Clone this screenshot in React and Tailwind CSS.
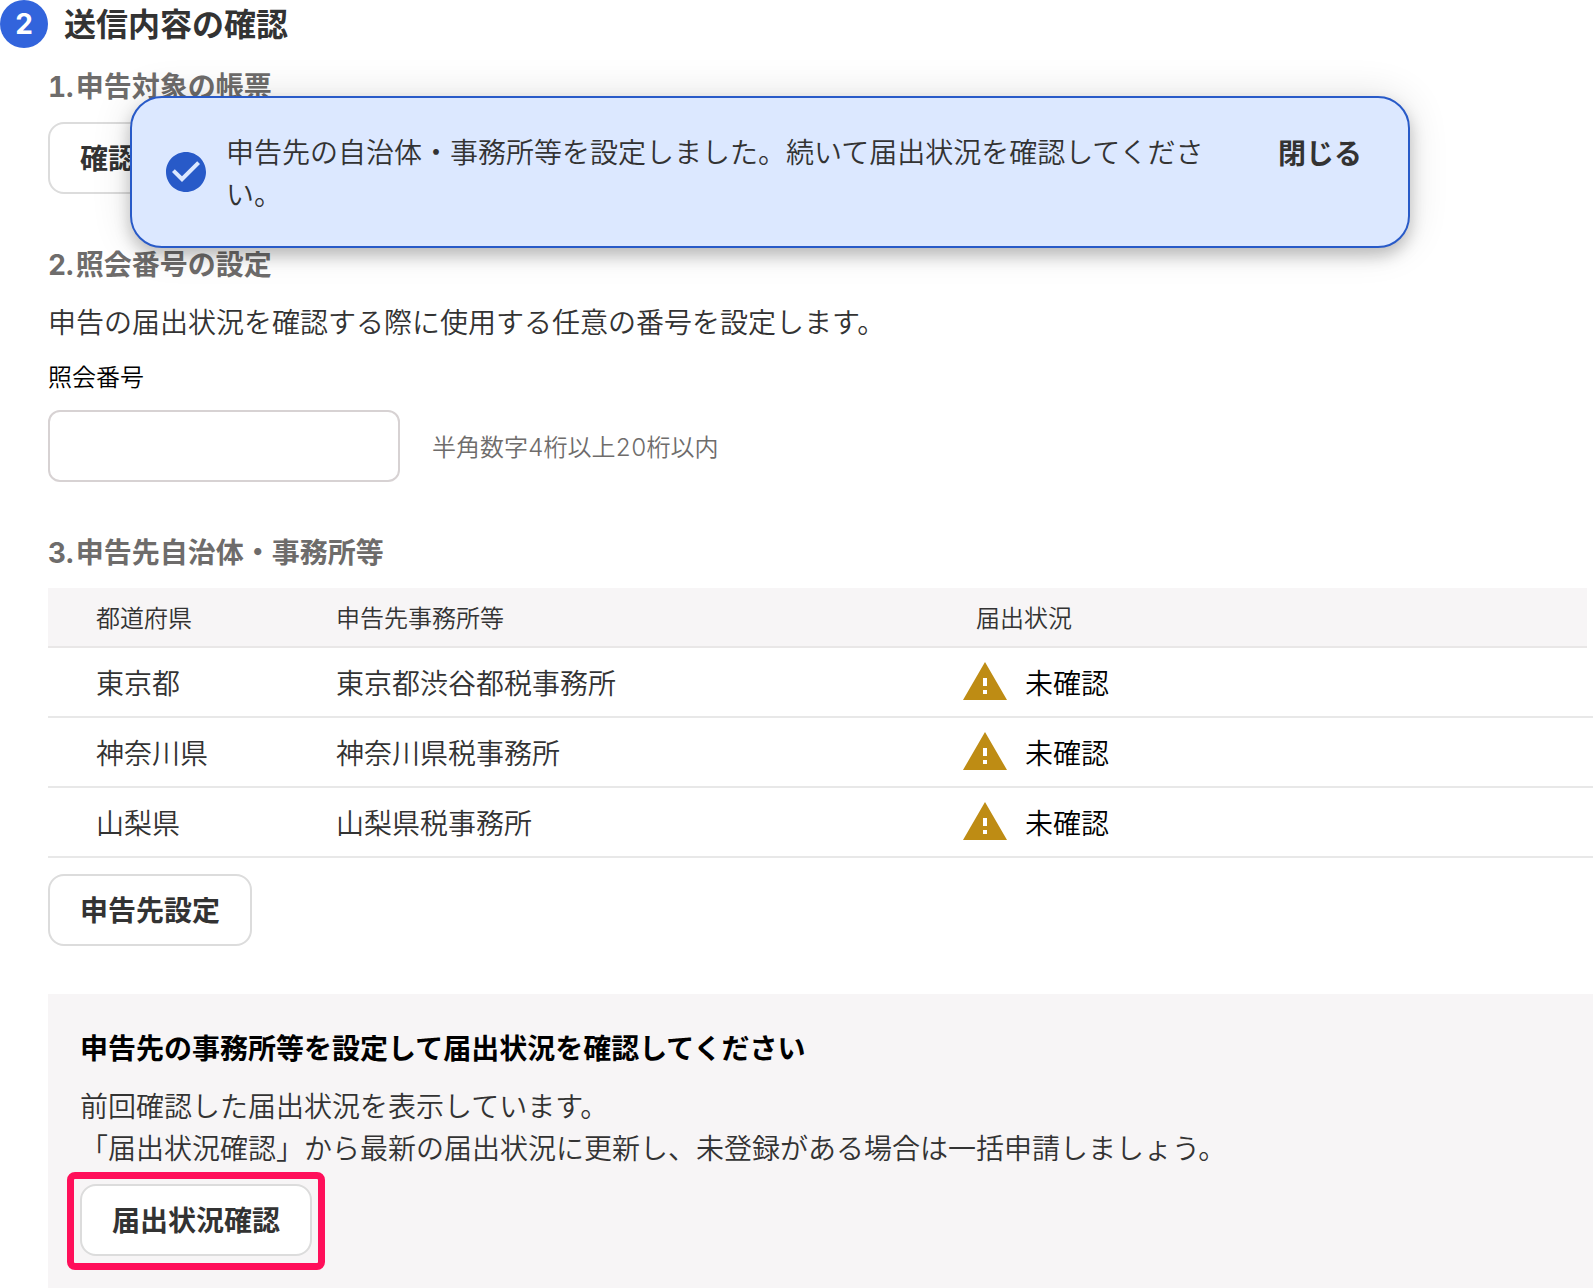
import React from 'react';
import { MdCheckCircle, MdWarning } from 'react-icons/md';

const OFFICES = [
  { prefecture: '東京都', office: '東京都渋谷都税事務所', status: '未確認' },
  { prefecture: '神奈川県', office: '神奈川県税事務所', status: '未確認' },
  { prefecture: '山梨県', office: '山梨県税事務所', status: '未確認' },
];

// Latin digits are set in Inter, everything else in the Japanese face
const Num = ({ children }) => (
  <span className="font-['Inter',sans-serif] leading-none tabular-nums">{children}</span>
);

const Button = ({ children }) => (
  <button
    type="button"
    className="flex h-18 items-start rounded-2xl border-2 border-[#dcdcdc] bg-white px-[30px] pt-3 text-[28px] leading-[42px] font-bold text-[#333333]"
  >
    {children}
  </button>
);

const SectionTitle = ({ number, children }) => (
  <h3 className="flex items-baseline gap-0.5 text-[28px] leading-[42px] font-bold text-[#6e6c6b]">
    <Num>{number}.</Num>
    <span>{children}</span>
  </h3>
);

const Toast = () => (
  <div
    role="status"
    className="absolute top-24 right-[183px] left-[130px] flex items-center rounded-[32px] border-2 border-[#285ac8] bg-[#dce8ff] py-8 pr-[46px] pl-[30px] shadow-[0_8px_16px_rgba(0,0,0,0.22),0_0_40px_rgba(0,0,0,0.12)]"
  >
    <MdCheckCircle className="size-12 shrink-0 text-[#285ac8]" />
    <p className="mx-4 flex-1 pr-14 text-[28px] leading-[42px] font-[350] text-[#333333]">
      申告先の自治体・事務所等を設定しました。続いて届出状況を確認してください。
    </p>
    <button
      type="button"
      className="shrink-0 self-start text-[28px] leading-11 font-bold text-[#333333]"
    >
      閉じる
    </button>
  </div>
);

const OfficeTable = () => (
  <table className="w-full table-fixed border-separate border-spacing-0 text-left text-[#333333]">
    <colgroup>
      <col className="w-60" />
      <col className="w-[640px]" />
      <col />
      <col className="w-1.5" />
    </colgroup>
    <thead>
      <tr className="h-[60px] text-2xl">
        <th className="border-b-2 border-[#e9e7e7] bg-[#f7f5f6] pl-12 font-[350]">都道府県</th>
        <th className="border-b-2 border-[#e9e7e7] bg-[#f7f5f6] pl-12 font-[350]">申告先事務所等</th>
        <th className="border-b-2 border-[#e9e7e7] bg-[#f7f5f6] pl-12 font-[350]">届出状況</th>
        <td />
      </tr>
    </thead>
    <tbody>
      {OFFICES.map((row) => (
        <tr key={row.prefecture} className="h-[70px] text-[28px] font-[350]">
          <td className="border-b-2 border-[#e8e8e8] pl-12">{row.prefecture}</td>
          <td className="border-b-2 border-[#e8e8e8] pl-12">{row.office}</td>
          <td className="border-b-2 border-[#e8e8e8] pl-[33px]" colSpan={2}>
            <div className="flex items-center gap-4 text-black">
              <MdWarning className="size-12 text-[#be8c14]" />
              {row.status}
            </div>
          </td>
        </tr>
      ))}
    </tbody>
  </table>
);

const App = () => (
  <main className="relative min-h-screen bg-white font-['Noto_Sans_CJK_JP',sans-serif]">
    <header className="flex items-start gap-4">
      <span className="flex size-12 items-center justify-center rounded-full bg-[#3264dc] font-['Inter',sans-serif] text-[28px] font-bold text-white">
        2
      </span>
      <h2 className="text-[32px] leading-11 font-bold text-[#333333]">送信内容の確認</h2>
    </header>

    <div className="pl-12">
      <section className="pt-4">
        <SectionTitle number={1}>申告対象の帳票</SectionTitle>
        <div className="mt-4">
          <Button>確認</Button>
        </div>
      </section>

      <section className="pt-12">
        <SectionTitle number={2}>照会番号の設定</SectionTitle>
        <p className="mt-4 text-[28px] leading-[42px] font-[350] text-[#333333]">
          申告の届出状況を確認する際に使用する任意の番号を設定します。
        </p>
        <label htmlFor="inquiry-number" className="mt-4 block text-2xl leading-9 font-[350] text-black">
          照会番号
        </label>
        <div className="mt-4 flex items-center gap-8">
          <input
            id="inquiry-number"
            type="text"
            inputMode="numeric"
            aria-describedby="inquiry-hint"
            className="h-18 w-88 rounded-xl border-2 border-[#d7d2d3] bg-white px-4 text-[28px]"
          />
          <span id="inquiry-hint" className="text-2xl leading-9 font-[350] text-[#6e6c6b]">
            半角数字<Num>4</Num>桁以上<Num>20</Num>桁以内
          </span>
        </div>
      </section>

      <section className="pt-12">
        <SectionTitle number={3}>申告先自治体・事務所等</SectionTitle>
        <div className="mt-4">
          <OfficeTable />
        </div>
        <div className="mt-4">
          <Button>申告先設定</Button>
        </div>
      </section>

      <section className="mt-12 bg-[#f7f5f6] px-8 pt-8 pb-8">
        <h3 className="text-[28px] leading-[42px] font-bold text-black">
          申告先の事務所等を設定して届出状況を確認してください
        </h3>
        <p className="mt-4 text-[28px] leading-[42px] font-[350] text-[#333333]">
          前回確認した届出状況を表示しています。
          <br />
          「届出状況確認」から最新の届出状況に更新し、未登録がある場合は一括申請しましょう。
        </p>
        <div className="mt-1 -ml-[13px] flex">
          <div className="rounded-lg border-[7px] border-[#ff0f5a] px-1.5 pt-[5px] pb-[7px]">
            <Button>届出状況確認</Button>
          </div>
        </div>
      </section>
    </div>

    <Toast />
  </main>
);

export default App;
